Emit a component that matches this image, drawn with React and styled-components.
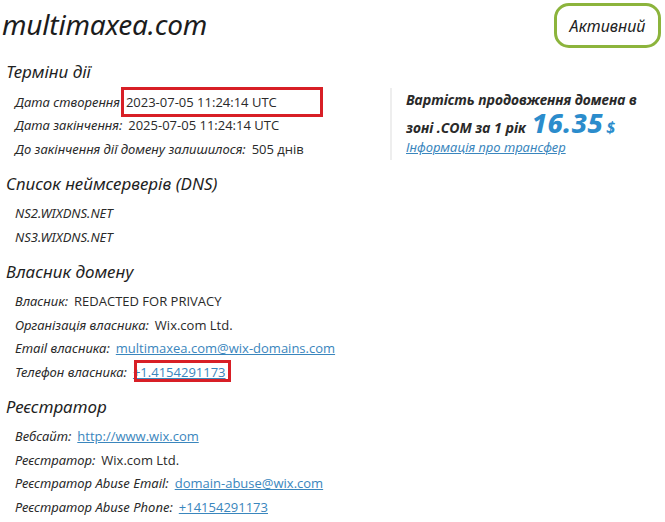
import styled, { createGlobalStyle } from "styled-components";

const GlobalStyle = createGlobalStyle`
  html, body {
    margin: 0;
    padding: 0;
    background: #fff;
  }
  body {
    font-family: "Noto Sans", "Open Sans", sans-serif;
    color: #222;
  }
`;

const Page = styled.div`
  width: 665px;
  padding: 0 4px 0 2px;
  box-sizing: border-box;
`;

const Header = styled.header`
  display: flex;
  justify-content: space-between;
  align-items: flex-start;
  height: 58px;
`;

const DomainName = styled.h1`
  margin: 6px 0 0;
  font-size: 28px;
  line-height: 36px;
  font-weight: 400;
  font-style: italic;
  color: #1c1c1c;
  letter-spacing: -0.2px;
`;

const StatusBadge = styled.div`
  margin-top: 3px;
  width: 107px;
  height: 45px;
  box-sizing: border-box;
  border: 3px solid #8cb43c;
  border-radius: 15px;
  display: flex;
  align-items: center;
  justify-content: center;
  font-size: 16px;
  font-style: italic;
  color: #222;
`;

const Main = styled.main`
  display: flex;
  align-items: flex-start;
`;

const Details = styled.div`
  width: 384px;
  padding-left: 4px;
`;

const Section = styled.section`
  & + & {
    margin-top: 9px;
  }
`;

const SectionTitle = styled.h2`
  margin: 0;
  font-size: 17px;
  line-height: 28px;
  font-weight: 400;
  font-style: italic;
  color: #1f1f1f;
`;

const Rows = styled.div`
  margin-top: 4px;
  padding-left: 9px;
`;

const Row = styled.div`
  position: relative;
  display: flex;
  align-items: center;
  gap: 6px;
  height: 23.5px;
  font-size: 13px;
  white-space: nowrap;
`;

const Label = styled.span`
  font-style: italic;
  color: #2a2a2a;
`;

const Value = styled.span`
  font-family: "Open Sans", "Liberation Sans", sans-serif;
  font-size: 13px;
  color: #2a2a2a;
`;

const Link = styled.a`
  font-family: "Open Sans", "Liberation Sans", sans-serif;
  font-size: 13px;
  color: #3a86bd;
  text-decoration: underline;
`;

/* red frame pinned over a row value */
const Highlight = styled.span`
  position: absolute;
  left: ${(p) => p.$left}px;
  top: ${(p) => p.$top}px;
  width: ${(p) => p.$width}px;
  height: ${(p) => p.$height}px;
  border: 3px solid #d81f26;
  box-sizing: border-box;
  pointer-events: none;
`;

const PricePanel = styled.aside`
  margin-top: 30px;
  border-left: 2px solid #eeeeee;
  padding: 0 0 3px 14px;
  height: 69px;
`;

const PriceLine = styled.div`
  height: 23px;
  font-size: 14px;
  font-weight: 700;
  font-style: italic;
  line-height: 23px;
  color: #2a2a2a;
  display: flex;
  align-items: baseline;
  gap: 6px;
`;

const Price = styled.span`
  font-size: 27px;
  line-height: 23px;
  font-weight: 800;
  color: #2b8ccc;
  letter-spacing: 0.5px;
`;

const Currency = styled.span`
  margin-left: -3px;
  font-size: 16px;
  line-height: 23px;
  color: #2b8ccc;
`;

const TransferLink = styled.a`
  display: block;
  margin-top: 1px;
  font-size: 13px;
  font-style: italic;
  line-height: 24px;
  color: #3a86bd;
  text-decoration: underline;
`;

const sections = [
  {
    title: "Терміни дії",
    rows: [
      { label: "Дата створення", value: "2023-07-05 11:24:14 UTC", mark: { left: 106, top: -3, width: 202, height: 30 } },
      { label: "Дата закінчення:", value: "2025-07-05 11:24:14 UTC" },
      { label: "До закінчення дії домену залишилося:", value: "505 днів" },
    ],
  },
  {
    title: "Список неймсерверів (DNS)",
    rows: [{ label: "NS2.WIXDNS.NET" }, { label: "NS3.WIXDNS.NET" }],
  },
  {
    title: "Власник домену",
    rows: [
      { label: "Власник:", value: "REDACTED FOR PRIVACY" },
      { label: "Організація власника:", value: "Wix.com Ltd." },
      { label: "Email власника:", link: "multimaxea.com@wix-domains.com" },
      { label: "Телефон власника:", link: "+1.4154291173", mark: { left: 119, top: 0, width: 97, height: 22 } },
    ],
  },
  {
    title: "Реєстратор",
    rows: [
      { label: "Вебсайт:", link: "http://www.wix.com" },
      { label: "Реєстратор:", value: "Wix.com Ltd." },
      { label: "Реєстратор Abuse Email:", link: "domain-abuse@wix.com" },
      { label: "Реєстратор Abuse Phone:", link: "+14154291173" },
    ],
  },
];

export default function App() {
  return (
    <>
      <GlobalStyle />
      <Page>
        <Header>
          <DomainName>multimaxea.com</DomainName>
          <StatusBadge>Активний</StatusBadge>
        </Header>
        <Main>
          <Details>
            {sections.map((section) => (
              <Section key={section.title}>
                <SectionTitle>{section.title}</SectionTitle>
                <Rows>
                  {section.rows.map((row) => (
                    <Row key={row.label}>
                      <Label>{row.label}</Label>
                      {row.value && <Value>{row.value}</Value>}
                      {row.link && <Link href="#">{row.link}</Link>}
                      {row.mark && (
                        <Highlight
                          $left={row.mark.left}
                          $top={row.mark.top}
                          $width={row.mark.width}
                          $height={row.mark.height}
                        />
                      )}
                    </Row>
                  ))}
                </Rows>
              </Section>
            ))}
          </Details>
          <PricePanel>
            <PriceLine>Вартість продовження домена в</PriceLine>
            <PriceLine>
              зоні .COM за 1 рік <Price>16.35</Price>
              <Currency>$</Currency>
            </PriceLine>
            <TransferLink href="#">Інформація про трансфер</TransferLink>
          </PricePanel>
        </Main>
      </Page>
    </>
  );
}
